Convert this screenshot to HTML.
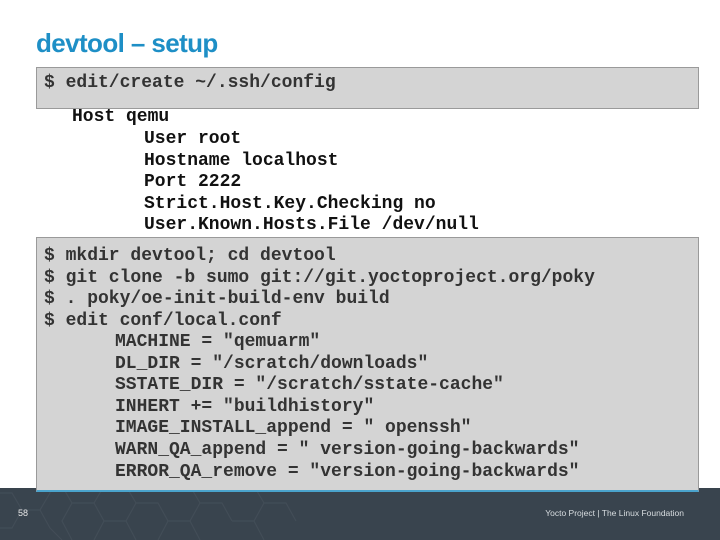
<!DOCTYPE html>
<html><head><meta charset="utf-8"><style>
html,body{margin:0;padding:0}
body{width:720px;height:540px;position:relative;background:#fff;overflow:hidden;font-family:"Liberation Sans",sans-serif}
.t{position:absolute;left:36px;top:28px;font-size:26px;font-weight:bold;color:#1e8fc6;letter-spacing:-0.6px}
.box{position:absolute;background:#d4d4d4;border:1px solid #9a9a9a}
.m{position:absolute;font-family:"Liberation Mono","Courier New",monospace;font-weight:bold;font-size:18px;line-height:21.6px;white-space:pre;color:#333}
.k{color:#111}
.foot{position:absolute;left:0;top:488px;width:720px;height:52px;background:#39444e}
</style></head><body>
<div class="t">devtool – setup</div>
<div class="box" style="left:36px;top:67px;width:661px;height:40px"></div>
<div class="m" style="left:44px;top:73px">$ edit/create ~/.ssh/config</div>
<div class="m k" style="left:72px;top:107px">Host qemu</div>
<div class="m k" style="left:144px;top:129px">User root
Hostname localhost
Port 2222
Strict.Host.Key.Checking no
User.Known.Hosts.File /dev/null</div>
<div class="foot">
<svg width="720" height="52" style="position:absolute;left:0;top:0" fill="none" stroke="#424d57" stroke-width="1.2">
<path d="M0 5 L12 5 L22 22 L12 40 L0 40 M22 22 L40 22 L50 5 L50 -10 M40 22 L50 40 L62 52 M62 -2 L72 15 L94 15 L104 -2 M72 15 L62 33 L72 52 M94 15 L104 33 L94 52 M104 33 L126 33 L136 15 L158 15 L168 33 L158 52 M136 15 L126 -2 M126 33 L136 52 M168 33 L190 33 L200 15 L222 15 L232 33 M200 15 L190 -2 M190 33 L200 52 M232 33 L254 33 L264 15 L286 15 L296 33 M264 15 L254 -2 M254 33 L264 52"/>
</svg>
<div style="position:absolute;left:18px;top:20px;color:#e8e8e8;font-size:9px">58</div>
<div style="position:absolute;right:36px;top:20px;color:#d8dde0;font-size:8.5px">Yocto Project | The Linux Foundation</div>
</div>
<div class="box" style="left:36px;top:237px;width:661px;height:252px;border-bottom:2px solid #4aa3cc"></div>
<div class="m" style="left:44px;top:246px">$ mkdir devtool; cd devtool
$ git clone -b sumo git://git.yoctoproject.org/poky
$ . poky/oe-init-build-env build
$ edit conf/local.conf</div>
<div class="m" style="left:115px;top:332px">MACHINE = "qemuarm"
DL_DIR = "/scratch/downloads"
SSTATE_DIR = "/scratch/sstate-cache"
INHERT += "buildhistory"
IMAGE_INSTALL_append = " openssh"
WARN_QA_append = " version-going-backwards"
ERROR_QA_remove = "version-going-backwards"</div>
</body></html>
